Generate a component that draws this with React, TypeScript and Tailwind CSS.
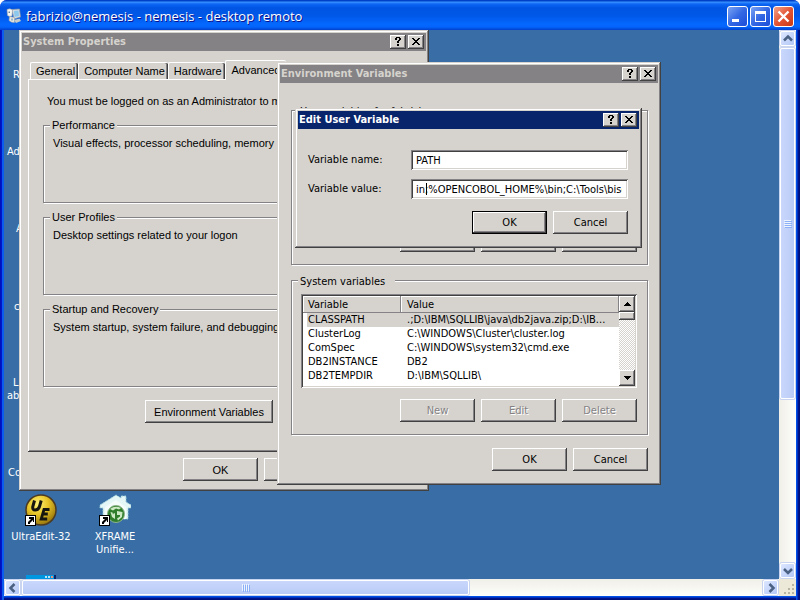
import React, { FC, ReactNode } from 'react';
import clsx from 'clsx';

type Direction = 'up' | 'down' | 'left' | 'right';

type Variable = {
  name: string;
  value: string;
};

const TAHOMA = "font-['DejaVu_Sans_Condensed','Liberation_Sans',sans-serif]";
const SHELL = "font-['Liberation_Sans',sans-serif]";

const RAISED = 'bg-[#d6d3ce] shadow-[inset_-1px_-1px_#424142,inset_1px_1px_#fff,inset_-2px_-2px_#848284]';
const SUNKEN =
  'bg-white shadow-[inset_1px_1px_#848284,inset_-1px_-1px_#fff,inset_2px_2px_#424142,inset_-2px_-2px_#d6d3ce]';

const systemVariables: Variable[] = [
  { name: 'CLASSPATH', value: '.;D:\\IBM\\SQLLIB\\java\\db2java.zip;D:\\IB...' },
  { name: 'ClusterLog', value: 'C:\\WINDOWS\\Cluster\\cluster.log' },
  { name: 'ComSpec', value: 'C:\\WINDOWS\\system32\\cmd.exe' },
  { name: 'DB2INSTANCE', value: 'DB2' },
  { name: 'DB2TEMPDIR', value: 'D:\\IBM\\SQLLIB\\' },
];

const tabs = ['General', 'Computer Name', 'Hardware', 'Advanced'];

/* ---------- classic controls ---------- */

type ButtonProps = {
  children: ReactNode;
  className?: string;
  isDefault?: boolean;
  disabled?: boolean;
};

const Button: FC<ButtonProps> = ({ children, className = 'w-[75px]', isDefault, disabled }) => (
  <button
    type="button"
    disabled={disabled}
    className={clsx(
      'flex h-[23px] shrink-0 items-center justify-center whitespace-nowrap',
      isDefault
        ? 'bg-[#d6d3ce] shadow-[inset_0_0_0_1px_#000,inset_-2px_-2px_#424142,inset_2px_2px_#fff,inset_-3px_-3px_#848284]'
        : RAISED,
      disabled && 'text-[#848284] [text-shadow:1px_1px_#fff]',
      className,
    )}
  >
    {children}
  </button>
);

const CaptionButton: FC<{ label: string; children: ReactNode }> = ({ label, children }) => (
  <button type="button" aria-label={label} className={clsx('flex h-3.5 w-4 items-start justify-center pt-0.5', RAISED)}>
    <svg width="8" height="9" viewBox="0 0 8 9" shapeRendering="crispEdges" fill="#000">
      {children}
    </svg>
  </button>
);

type WindowProps = {
  title: string;
  active?: boolean;
  className: string;
  children: ReactNode;
};

const Window: FC<WindowProps> = ({ title, active, className, children }) => (
  <section
    aria-label={title}
    className={clsx(
      'absolute bg-[#d6d3ce] p-[3px] text-[11px] leading-[14px] text-black',
      'shadow-[inset_-1px_-1px_#424142,inset_1px_1px_#d6d3ce,inset_-2px_-2px_#848284,inset_2px_2px_#fff]',
      className,
    )}
  >
    <header
      className={clsx(
        'flex h-[18px] items-center gap-0.5 pl-px pr-0.5 font-bold',
        TAHOMA,
        active ? 'bg-[#08246b] text-white' : 'bg-[#848284] text-[#d6d3ce]',
      )}
    >
      <h2 className="flex-1 whitespace-nowrap">{title}</h2>
      <CaptionButton label="Help">
        <path d="M2 0h4v1H2zM1 1h2v2H1zM5 1h2v2H5zM4 3h2v1H4zM3 4h2v2H3zM3 7h2v2H3z" />
      </CaptionButton>
      <CaptionButton label="Close">
        <path d="M0 1h2v1H0zM6 1h2v1H6zM1 2h2v1H1zM5 2h2v1H5zM2 3h4v1H2zM3 4h2v1H3zM2 5h4v1H2zM1 6h2v1H1zM5 6h2v1H5zM0 7h2v1H0zM6 7h2v1H6z" />
      </CaptionButton>
    </header>
    {children}
  </section>
);

type GroupProps = {
  legend: string;
  legendClass: string;
  className: string;
  children: ReactNode;
};

const Group: FC<GroupProps> = ({ legend, legendClass, className, children }) => (
  <fieldset
    className={clsx('min-w-0 border border-[#848284] shadow-[1px_1px_#fff,inset_1px_1px_#fff]', className)}
  >
    <legend className={clsx('-ml-[3px] bg-[#d6d3ce] whitespace-nowrap', legendClass)}>{legend}</legend>
    {children}
  </fieldset>
);

/* ---------- System Properties ---------- */

const PropertyGroup: FC<{ legend: string; children: ReactNode }> = ({ legend, children }) => (
  <Group legend={legend} legendClass="px-0.5" className="h-[85px] pl-[9px] pt-1">
    <p className="whitespace-nowrap">{children}</p>
  </Group>
);

const SystemProperties = () => (
  <Window title="System Properties" className={clsx('left-[15px] top-0 w-[410px]', SHELL)}>
    <div className="px-1.5 pb-[7px] pt-[9px]">
      <div role="tablist" className="flex items-end pl-0.5">
        {tabs.map((tab) => {
          const selected = tab === 'Advanced';
          return (
            <button
              key={tab}
              type="button"
              role="tab"
              aria-selected={selected}
              className={clsx(
                'whitespace-nowrap rounded-t-[2px] border-l border-t border-white bg-[#d6d3ce]',
                selected
                  ? 'relative -mb-px h-5 px-1.5 pb-0.5'
                  : 'h-[17px] pl-[5px] pr-[3px] shadow-[inset_-1px_0_#424142,inset_-2px_0_#848284]',
              )}
            >
              {tab}
            </button>
          );
        })}
      </div>
      <div
        role="tabpanel"
        className="px-[15px] pb-[29px] pt-[15px] shadow-[inset_-1px_-1px_#424142,inset_1px_1px_#fff,inset_-2px_-2px_#848284]"
      >
        <p className="whitespace-nowrap pl-1">
          You must be logged on as an Administrator to make most of these changes.
        </p>
        <div className="mt-2.5 flex flex-col gap-[7px]">
          <PropertyGroup legend="Performance">
            Visual effects, processor scheduling, memory usage, and virtual memory
          </PropertyGroup>
          <PropertyGroup legend="User Profiles">Desktop settings related to your logon</PropertyGroup>
          <PropertyGroup legend="Startup and Recovery">
            System startup, system failure, and debugging information
          </PropertyGroup>
        </div>
        <Button className="ml-[102px] mt-[13px] w-32">Environment Variables</Button>
      </div>
      <div className="mt-1.5 flex justify-end gap-1.5">
        <Button>OK</Button>
        <Button>Cancel</Button>
        <Button>Apply</Button>
      </div>
    </div>
  </Window>
);

/* ---------- Environment Variables ---------- */

const ListScrollbar = () => (
  <div className="flex w-4 flex-col bg-[repeating-conic-gradient(#fff_0_25%,#d6d3ce_0_50%)] bg-[length:2px_2px]">
    <button type="button" aria-label="Scroll up" className={clsx('flex h-4 items-center justify-center', RAISED)}>
      <svg width="7" height="4" shapeRendering="crispEdges">
        <path d="M3 0h1v1h1v1h1v1h1v1H0V3h1V2h1V1h1z" />
      </svg>
    </button>
    <div className={clsx('h-2', RAISED)} />
    <button
      type="button"
      aria-label="Scroll down"
      className={clsx('mt-auto flex h-4 items-center justify-center', RAISED)}
    >
      <svg width="7" height="4" shapeRendering="crispEdges">
        <path d="M0 0h7v1H6v1H5v1H4v1H3V3H2V2H1V1H0z" />
      </svg>
    </button>
  </div>
);

const VariableTable: FC<{ rows: Variable[] }> = ({ rows }) => (
  <table className="h-fit flex-1 table-fixed border-collapse text-left">
    <thead>
      <tr className="h-[17px]">
        {['Variable', 'Value'].map((heading, i) => (
          <th
            key={heading}
            className={clsx(
              'bg-[#d6d3ce] p-0 font-normal shadow-[inset_-1px_-1px_#848284,inset_1px_1px_#fff]',
              i === 0 ? 'w-[98px] pl-[5px]' : 'pl-1.5',
            )}
          >
            {heading}
          </th>
        ))}
      </tr>
    </thead>
    <tbody>
      {rows.map(({ name, value }, i) => (
        <tr key={name}>
          <td className="p-0 pl-1">
            <div className={clsx('pl-px', i === 0 && 'bg-[#d6d3ce]')}>{name}</div>
          </td>
          <td className={clsx('whitespace-nowrap p-0 pl-1.5', i === 0 && 'bg-[#d6d3ce]')}>{value}</td>
        </tr>
      ))}
    </tbody>
  </table>
);

type VariableGroupProps = {
  legend: string;
  rows?: Variable[];
};

const VariableGroup: FC<VariableGroupProps> = ({ legend, rows }) => (
  <Group legend={legend} legendClass="pl-0.5 pr-2.5 pt-[3px]" className="pb-3 pl-[9px] pr-2.5 pt-[5px]">
    <div className={clsx('flex h-[94px] p-0.5', SUNKEN)}>
      {rows && <VariableTable rows={rows} />}
      {rows && <ListScrollbar />}
    </div>
    <div className="mt-[11px] flex justify-end gap-1.5">
      <Button disabled>New</Button>
      <Button disabled>Edit</Button>
      <Button disabled>Delete</Button>
    </div>
  </Group>
);

const EnvironmentVariables = () => (
  <Window title="Environment Variables" className={clsx('left-[273px] top-8 w-[384px]', TAHOMA)}>
    <div className="pb-[11px] pl-[11px] pr-2.5 pt-[19px]">
      <div className="flex flex-col gap-[7px]">
        <VariableGroup legend="User variables for fabrizio" />
        <VariableGroup legend="System variables" rows={systemVariables} />
      </div>
      <div className="mt-[13px] flex justify-end gap-1.5">
        <Button>OK</Button>
        <Button>Cancel</Button>
      </div>
    </div>
  </Window>
);

/* ---------- Edit User Variable ---------- */

const EditUserVariable = () => (
  <Window active title="Edit User Variable" className={clsx('left-[291px] top-[78px] w-[347px]', TAHOMA)}>
    <form className="pb-[11px] pl-2.5 pr-[11px] pt-[21px]">
      <div className="grid grid-cols-[103px_1fr] items-center gap-y-[9px]">
        <label htmlFor="variable-name">Variable name:</label>
        <input
          id="variable-name"
          type="text"
          defaultValue="PATH"
          className={clsx('h-5 w-full min-w-0 px-[5px] outline-none', SUNKEN)}
        />
        <label htmlFor="variable-value">Variable value:</label>
        <div className="relative">
          <input
            id="variable-value"
            type="text"
            defaultValue="in;%OPENCOBOL_HOME%\bin;C:\Tools\bison"
            className={clsx('block h-5 w-full min-w-0 pl-[5px] pr-1.5 outline-none', SUNKEN)}
          />
          <span className="absolute left-[15px] top-1 h-3 w-px bg-black" />
        </div>
      </div>
      <div className="mt-3 flex justify-end gap-1.5">
        <Button isDefault>OK</Button>
        <Button>Cancel</Button>
      </div>
    </form>
  </Window>
);

/* ---------- remote desktop ---------- */

const ShortcutArrow = () => (
  <g>
    <path d="M0 21h11v11H0z" fill="#000" />
    <path d="M1 22h9v9H1z" fill="#fff" />
    <path d="M4 23h5v5H8v-2L7 27l-1 1-1 1v1H3v-2l1-1 1-1 1-1H4z" fill="#000" />
  </g>
);

const UltraEditIcon = () => (
  <svg width="32" height="32" viewBox="0 0 32 32">
    <defs>
      <radialGradient id="gold" cx="40%" cy="30%" r="75%">
        <stop offset="0" stopColor="#fff27a" />
        <stop offset="0.45" stopColor="#e8c528" />
        <stop offset="1" stopColor="#8e6d08" />
      </radialGradient>
    </defs>
    <circle cx="16" cy="16" r="15" fill="url(#gold)" stroke="#4c3b22" strokeWidth="1.5" />
    <path
      d="M9.500 6.500 7.800 12.500Q7.200 16 10.200 16Q13.500 16 14.500 12.500L16.200 6.500"
      fill="none"
      stroke="#17150f"
      strokeWidth="3"
    />
    <path d="M24.500 15.500h-5.500l-2.800 9.500h6M17.800 20h5" fill="none" stroke="#17150f" strokeWidth="2.800" />
    <ShortcutArrow />
  </svg>
);

const XframeIcon = () => (
  <svg width="32" height="32" viewBox="0 0 32 32">
    <path
      d="M1 11 17 1l5 3V2h5v6l5 3v3h-3v11H4V14H1z"
      fill="#e4f6f6"
      stroke="#9ccfda"
      strokeDasharray="2 1"
    />
    <path d="M6 13 17 6l10 7v12H6z" fill="#f3fbfb" />
    <circle cx="17" cy="20" r="8.500" fill="#2f7d2b" stroke="#8db58a" />
    <path d="M11 15q5-4 11-1l-2 1.500-3-1-3 2zM11.500 18l2 .5.500 2 1-1.500 1 .5v5.500l-3-2zM18 17l5.500 1-.5 5-4 3.500-1-2 3-2v-1.500h-3z" fill="#cde9c4" />
    <ShortcutArrow />
  </svg>
);

type ShortcutProps = {
  label: string;
  className: string;
  icon: ReactNode;
};

const Shortcut: FC<ShortcutProps> = ({ label, className, icon }) => (
  <button type="button" className={clsx('absolute flex w-[74px] flex-col items-center gap-1', className)}>
    {icon}
    <span className="whitespace-pre text-center leading-[13px]">{label}</span>
  </button>
);

const Desktop = () => (
  <main className={clsx('relative min-w-0 flex-1 overflow-hidden bg-[#396da5] text-[11px] text-white', TAHOMA)}>
    {/* labels of the icons that lie behind the windows */}
    <span className="absolute left-[9px] top-[38px] leading-[14px]">R</span>
    <span className="absolute left-[3px] top-[115px] leading-[14px]">Ad</span>
    <span className="absolute left-3 top-[192px] leading-[14px]">A</span>
    <span className="absolute left-2.5 top-[270px] leading-[14px]">c</span>
    <span className="absolute left-[9px] top-[346px] leading-[14px]">L</span>
    <span className="absolute left-[3px] top-[359px] leading-[14px]">ab</span>
    <span className="absolute left-1 top-[436px] leading-[14px]">Co</span>

    <Shortcut className="left-0 top-[464px]" label="UltraEdit-32" icon={<UltraEditIcon />} />
    <Shortcut className="left-[74px] top-[464px]" label={'XFRAME\nUnifie...'} icon={<XframeIcon />} />
    <svg className="absolute left-[22px] top-[545px]" width="30" height="4" shapeRendering="crispEdges">
      <path d="M0 0h30v4H0z" fill="#0096e0" />
      <path d="M28 0h2v4h-2z" fill="#08246b" />
      <path d="M19 1h2v2h-2zM22 1h2v2h-2z" fill="#b8e4f8" />
      <path d="M25 1h2v2h-2z" fill="#f09070" />
    </svg>

    <SystemProperties />
    <EnvironmentVariables />
    <EditUserVariable />
  </main>
);

/* ---------- Luna frame ---------- */

const arrowPaths: Record<Direction, string> = {
  up: 'M1 6.500 5 2.500 9 6.500',
  down: 'M1 3 5 7 9 3',
  left: 'M6.500 1 2.500 5 6.500 9',
  right: 'M3.500 1 7.500 5 3.500 9',
};

const LunaArrow: FC<{ direction: Direction }> = ({ direction }) => (
  <button
    type="button"
    aria-label={`Scroll ${direction}`}
    className="flex size-[15px] shrink-0 items-center justify-center rounded-[2px] border border-white bg-gradient-to-br from-[#dce6ff] to-[#b4c8f6] shadow-[0_0_0_1px_#c8d4f0]"
  >
    <svg width="10" height="10" viewBox="0 0 10 10">
      <path d={arrowPaths[direction]} fill="none" stroke="#4a6184" strokeWidth="2.500" />
    </svg>
  </button>
);

const VerticalScrollbar = () => (
  <div className="flex w-[17px] flex-col items-center gap-0.5 bg-gradient-to-r from-[#f0efe8] to-[#fefefb] py-px">
    <LunaArrow direction="up" />
    <div className="flex w-[15px] flex-[350] flex-col items-center justify-center gap-px rounded-[2px] border border-white bg-gradient-to-r from-[#c9d7fc] to-[#b9cbf6] shadow-[0_0_0_1px_#c8d4f0]">
      {[0, 1, 2, 3].map((line) => (
        <i key={line} className="h-px w-[7px] bg-[#eef4fe] shadow-[1px_1px_#8cb0f8]" />
      ))}
    </div>
    <div className="flex-[161]" />
    <LunaArrow direction="down" />
  </div>
);

const HorizontalScrollbar = () => (
  <div className="flex min-w-0 flex-1 items-center gap-0.5 bg-gradient-to-b from-[#f0efe8] to-[#fefefb] px-px">
    <LunaArrow direction="left" />
    <div className="flex h-[15px] flex-[448] items-center justify-center gap-px rounded-[2px] border border-white bg-gradient-to-b from-[#c9d7fc] to-[#b9cbf6] shadow-[0_0_0_1px_#c8d4f0]">
      {[0, 1, 2, 3].map((line) => (
        <i key={line} className="h-[7px] w-px bg-[#eef4fe] shadow-[1px_1px_#8cb0f8]" />
      ))}
    </div>
    <div className="flex-[292]" />
    <LunaArrow direction="right" />
  </div>
);

const RemoteIcon = () => (
  <svg width="16" height="16" viewBox="0 0 16 16">
    <path d="M6 1.500 13.500 1l1 8-6.500 2z" fill="#d4dce2" stroke="#8c98a4" strokeWidth="0.700" />
    <path d="M8 3 12.500 2.500l.5 5.500-4.500 1z" fill="#8cc8ee" />
    <path d="M8 12l5.500-1.500L15 13l-5 2z" fill="#c8ccc8" />
    <path d="M1 1.500Q4 0 6.500 2L6 8Q3.500 9 1.500 7.500z" fill="#f6f6f2" stroke="#9aa4ac" strokeWidth="0.600" />
    <path d="M2.500 3.500h1.500v1.500H2.500z" fill="#6c8498" />
    <path d="M3.500 8.500 8.500 9.500 8.500 14.500Q5.500 15 3 12.500z" fill="#e8e8e0" stroke="#9aa4ac" strokeWidth="0.600" />
    <path d="M5 10.500h2v2H5z" fill="#9cb4c6" />
  </svg>
);

type FrameButtonProps = {
  label: string;
  close?: boolean;
  children: ReactNode;
};

const FrameButton: FC<FrameButtonProps> = ({ label, close, children }) => (
  <button
    type="button"
    aria-label={label}
    className={clsx(
      'flex size-[21px] items-center justify-center rounded-[3px] border border-white',
      close
        ? 'bg-gradient-to-br from-[#f0a088] via-[#e35434] to-[#c83810]'
        : 'bg-gradient-to-br from-[#7ba2f2] via-[#3468e4] to-[#1c4cd8]',
    )}
  >
    <svg width="19" height="19" viewBox="0 0 19 19">
      {children}
    </svg>
  </button>
);

const TitleBar = () => (
  <header className="flex h-[30px] shrink-0 items-center gap-1 bg-[linear-gradient(#0040c8_0,#0040c8_1px,#3c94ff_2px,#0c66f4_4px,#0054e3_8px,#0058e8_16px,#0468ff_24px,#0464fc_27px,#0040cc_30px)] px-1.5 pt-0.5">
    <RemoteIcon />
    <h1 className="flex-1 truncate font-['Open_Sans','Noto_Sans',sans-serif] text-[13px] leading-5 font-medium text-white [text-shadow:1px_1px_#0f1089]">
      fabrizio@nemesis - nemesis - desktop remoto
    </h1>
    <div className="flex gap-0.5">
      <FrameButton label="Minimize">
        <path d="M4 12h7v3H4z" fill="#fff" />
      </FrameButton>
      <FrameButton label="Restore">
        <path d="M4 4h11v11H4zM5 7v7h9V7z" fill="#fff" fillRule="evenodd" />
      </FrameButton>
      <FrameButton label="Close" close>
        <path d="M4.500 4.500l10 10M14.500 4.500l-10 10" stroke="#fff" strokeWidth="2.400" />
      </FrameButton>
    </div>
  </header>
);

const SizeGrip = () => (
  <svg width="17" height="17" viewBox="0 0 17 17" className="bg-[#ece9d8]" shapeRendering="crispEdges">
    <path
      d="M13 5h2v2h-2zM9 9h2v2H9zM13 9h2v2h-2zM5 13h2v2H5zM9 13h2v2H9zM13 13h2v2h-2z"
      fill="#b8b4a2"
    />
  </svg>
);

const App = () => (
  <div className="flex h-screen flex-col overflow-hidden rounded-t-[7px] bg-[#0831d9]">
    <TitleBar />
    <div className="flex min-h-0 flex-1 bg-[linear-gradient(90deg,#0010b8_0,#0018cc_2px,#0c5cf0_2px,#0c5cf0_4px,#0050e8_4px,#0050e8_calc(100%_-_3px),#001498_calc(100%_-_2px),#001070_100%)] px-1">
      <div className="flex min-w-0 flex-1 flex-col bg-[linear-gradient(#0050e8_calc(100%_-_3px),#001498_calc(100%_-_2px),#001070_100%)] pb-1">
        <div className="flex min-h-0 flex-1">
          <Desktop />
          <VerticalScrollbar />
        </div>
        <div className="flex h-[17px] shrink-0">
          <HorizontalScrollbar />
          <SizeGrip />
        </div>
      </div>
    </div>
  </div>
);

export default App;
